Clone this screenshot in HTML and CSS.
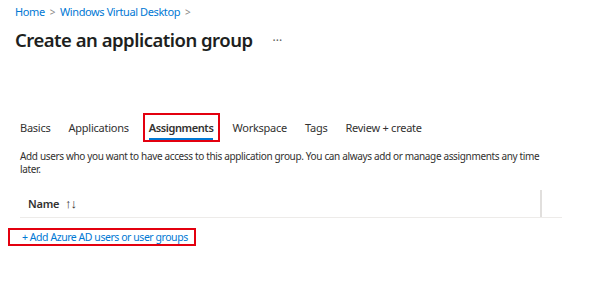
FILE: index.html
```html
<!DOCTYPE html>
<html>
<head>
<meta charset="utf-8">
<link rel="stylesheet" href="styles.css">
</head>
<body>
<div class="page">
  <nav class="crumbs">
    <a class="crumb">Home</a><span class="sep">&gt;</span><a class="crumb">Windows Virtual Desktop</a><span class="sep">&gt;</span>
  </nav>
  <div class="title-row">
    <h1 class="title">Create an application group</h1>
    <span class="more">···</span>
  </div>
  <div class="tabs">
    <span class="tab">Basics</span>
    <span class="tab">Applications</span>
    <span class="tab active-wrap"><span class="tab-active">Assignments</span></span>
    <span class="tab">Workspace</span>
    <span class="tab">Tags</span>
    <span class="tab">Review + create</span>
  </div>
  <p class="desc">Add users who you want to have access to this application group. You can always add or manage assignments any time later.</p>
  <div class="table-head">
    <span class="col-name">Name <span class="sort">↑↓</span></span>
    <span class="col-sep"></span>
  </div>
  <div class="add-row">
    <a class="add-link">+ Add Azure AD users or user groups</a>
  </div>
</div>
</body>
</html>
```
FILE: styles.css
```css
html, body {
  margin: 0;
  padding: 0;
  background: #ffffff;
}
body {
  font-family: "Segoe UI", "Noto Sans", "Open Sans", sans-serif;
  color: #323130;
  width: 605px;
  height: 302px;
  overflow: hidden;
}
.page {
  padding: 4px 0 0 15px;
}
.crumbs {
  font-size: 11px;
  letter-spacing: -0.4px;
  line-height: 16px;
  display: flex;
  align-items: center;
}
.crumb {
  color: #0078d4;
}
.sep {
  color: #8a8886;
  margin: 0 5px 0 5px;
  font-size: 10px;
}
.title-row {
  display: flex;
  align-items: center;
  margin-top: 5px;
  height: 30px;
}
.title {
  margin: 0;
  font-size: 18.5px;
  letter-spacing: -0.5px;
  font-weight: 600;
  line-height: 30px;
  color: #201f1e;
}
.more {
  margin-left: 20px;
  font-size: 12px;
  color: #605e5c;
}
.tabs {
  display: flex;
  align-items: center;
  gap: 18px;
  margin-top: 58px;
  margin-left: 5px;
  height: 29px;
  font-size: 11px;
  letter-spacing: -0.25px;
}
.tab {
  color: #323130;
  line-height: 20px;
}
.active-wrap {
  border: 2px solid #e3000f;
  padding: 0 5px 0 4px;
  margin-left: -4px;
  margin-right: -6px;
  height: 25px;
}
.tab-active {
  display: inline-block;
  margin-top: 3px;
  border-bottom: 2px solid #0078d4;
  line-height: 20px;
  font-weight: 600;
  letter-spacing: -0.4px;
}
.desc {
  margin: 8px 0 0 5px;
  width: 525px;
  font-size: 10px;
  letter-spacing: -0.35px;
  line-height: 13px;
  color: #323130;
}
.table-head {
  margin: 14px 0 0 5px;
  width: 542px;
  height: 27px;
  border-bottom: 1px solid #edebe9;
  display: flex;
  align-items: stretch;
  justify-content: space-between;
}
.col-name {
  padding-left: 8px;
  font-size: 11px;
  letter-spacing: -0.2px;
  font-weight: 600;
  line-height: 27px;
}
.sort {
  font-weight: 400;
  font-size: 13px;
  letter-spacing: -1px;
  margin-left: 3px;
  color: #323130;
}
.col-sep {
  width: 2px;
  background: #e1dfdd;
  margin-right: 20px;
}
.add-row {
  display: flex;
  margin: 10px 0 0 -7px;
}
.add-link {
  display: block;
  border: 2px solid #e3000f;
  padding: 0 6px 0 12px;
  font-size: 10.5px;
  letter-spacing: -0.45px;
  line-height: 14px;
  color: #0078d4;
}
```
